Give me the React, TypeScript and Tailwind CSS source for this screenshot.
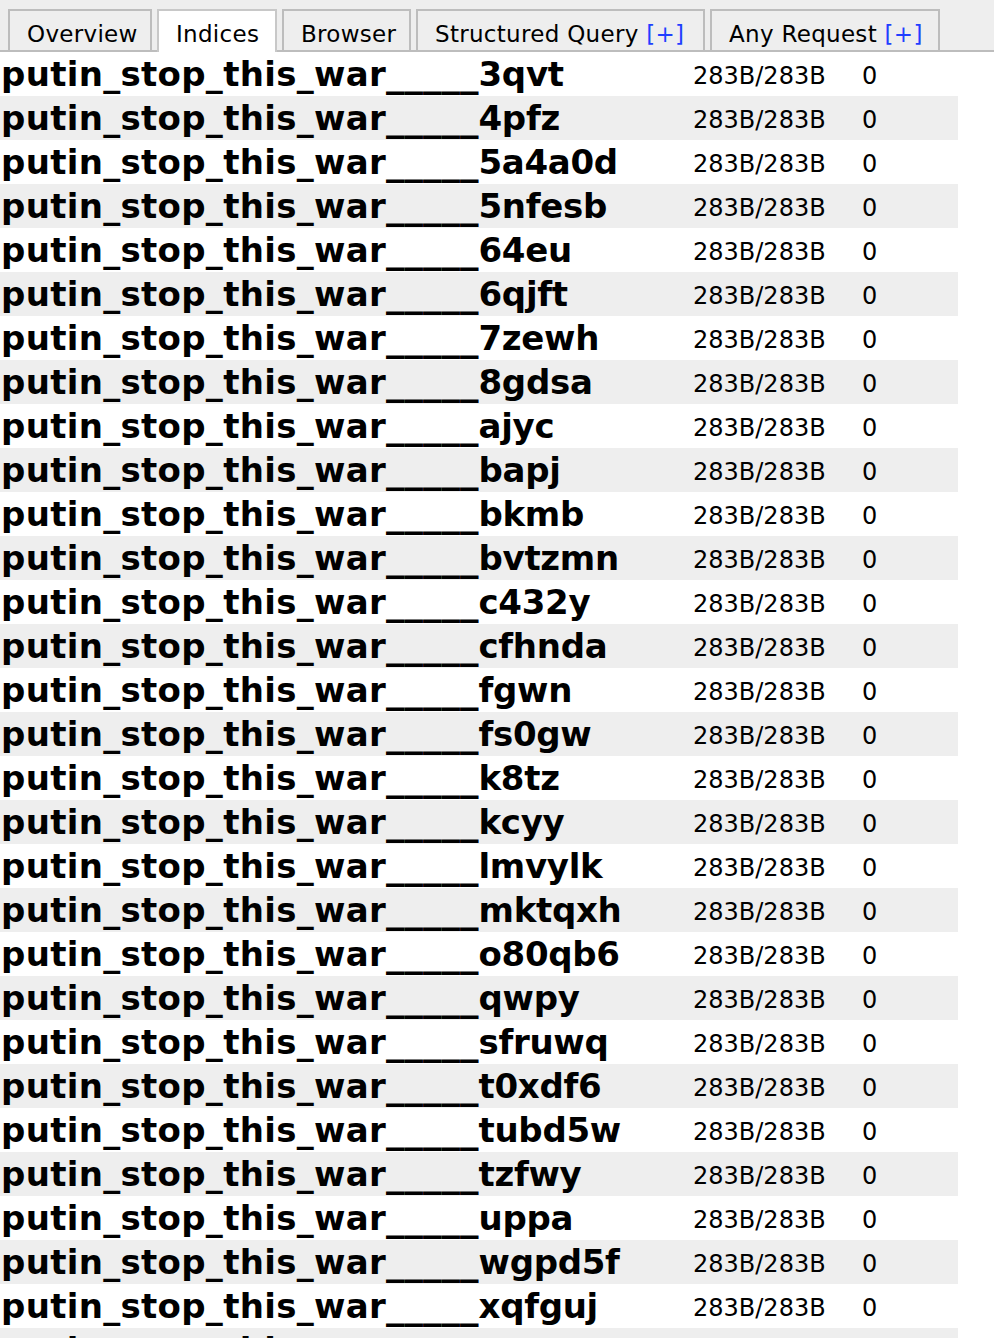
import React from 'react';

const tabs = [
  { label: 'Overview', active: false, plus: false, width: 'w-[144px]' },
  { label: 'Indices', active: true, plus: false, width: 'w-[120px]' },
  { label: 'Browser', active: false, plus: false, width: 'w-[129px]' },
  { label: 'Structured Query', active: false, plus: true, width: 'w-[289px]' },
  { label: 'Any Request', active: false, plus: true, width: 'w-[230px]' },
];

const suffixes = [
  '3qvt', '4pfz', '5a4a0d', '5nfesb', '64eu', '6qjft', '7zewh', '8gdsa', 'ajyc', 'bapj',
  'bkmb', 'bvtzmn', 'c432y', 'cfhnda', 'fgwn', 'fs0gw', 'k8tz', 'kcyy', 'lmvylk', 'mktqxh',
  'o80qb6', 'qwpy', 'sfruwq', 't0xdf6', 'tubd5w', 'tzfwy', 'uppa', 'wgpd5f', 'xqfguj', 'yzmv',
];

const App: React.FC = () => {
  return (
    <div className="min-h-screen bg-white text-black" style={{ fontFamily: '"DejaVu Sans", Verdana, sans-serif' }}>
      <div className="flex gap-[5px] bg-[#eeeeee] pl-[8px] pt-[9px] border-b-2 border-[#bdbdbd]">
        {tabs.map((tab) => (
          <div
            key={tab.label}
            className={`${tab.width} ${
              tab.active
                ? 'h-[43px] -mb-[2px] border-[#c8c8c8] bg-white'
                : 'h-[41px] border-[#bdbdbd] bg-[#eeeeee]'
            } border-t-2 border-x-2 pl-[17px] pt-[9px] text-[23px] leading-[28px] tracking-[0.3px] whitespace-nowrap`}
          >
            {tab.label}
            {tab.plus && <span className="text-[#1f3fff]"> [+]</span>}
          </div>
        ))}
      </div>

      <div className="w-[958px]">
        {suffixes.map((s, i) => (
          <div
            key={s}
            className={`flex items-start h-[44px] ${i % 2 === 1 ? 'bg-[#eeeeee]' : 'bg-white'}`}
          >
            <span className="w-[693px] pl-px text-[34px] leading-[44px] font-bold tracking-[0.3px] whitespace-nowrap">
              putin_stop_this_war<span className="text-[37px] tracking-normal">_____</span>
              <span className="tracking-[-0.3px]">{s}</span>
            </span>
            <span className="w-[169px] pt-[2px] text-[24px] leading-[44px]">283B/283B</span>
            <span className="pt-[2px] text-[24px] leading-[44px]">0</span>
          </div>
        ))}
      </div>
    </div>
  );
};

export default App;
